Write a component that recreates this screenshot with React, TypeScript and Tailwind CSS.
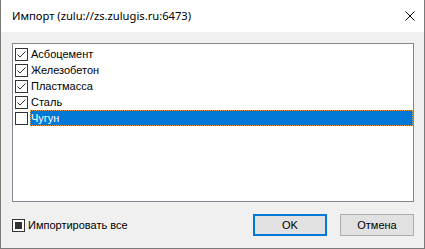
const items = [
  { label: 'Асбоцемент', checked: true },
  { label: 'Железобетон', checked: true },
  { label: 'Пластмасса', checked: true },
  { label: 'Сталь', checked: true },
  { label: 'Чугун', checked: false },
];
const selected = 4;

function CheckBox({ checked }: { checked: boolean }) {
  return (
    <div className="h-[13px] w-[13px] shrink-0 border border-[#333333] bg-white">
      {checked && (
        <svg width="11" height="11" viewBox="0 0 11 11" className="block">
          <path d="M1.5 5.5 L4 8 L9.5 2.5" fill="none" stroke="#333333" strokeWidth="1" />
        </svg>
      )}
    </div>
  );
}

export default function App() {
  return (
    <div
      className="flex h-[249px] w-[425px] flex-col border-x border-b border-[#7a7a7a] text-[11px] text-black"
      style={{ fontFamily: '"Liberation Sans", Arial, sans-serif' }}
    >
      <div
        className="flex h-[32px] shrink-0 items-center justify-between bg-white pl-[11px] pr-[9px] text-[11.2px]"
        style={{ fontFamily: '"Noto Sans", "Liberation Sans", sans-serif' }}
      >
        <span>Импорт (zulu://zs.zulugis.ru:6473)</span>
        <svg width="10" height="10" viewBox="0 0 10 10">
          <path d="M0.5 0.5 L9.5 9.5 M9.5 0.5 L0.5 9.5" stroke="#000" strokeWidth="1" />
        </svg>
      </div>

      <div className="flex flex-1 flex-col bg-[#f0f0f0] pl-[11px] pr-[10px] pt-[11px]">
        <div className="h-[159px] border border-[#828790] bg-white pt-[2px]">
          {items.map((item, i) => (
            <div key={item.label} className="flex h-[16px] items-start">
              <div className="ml-[2px] mt-[2px]">
                <CheckBox checked={item.checked} />
              </div>
              <div
                className={`ml-[2px] flex h-[16px] flex-1 items-center leading-none ${
                  i === selected ? 'border border-dotted border-[#f29a2e] bg-[#0078d7] text-white' : 'border border-transparent'
                }`}
              >
                {item.label}
              </div>
            </div>
          ))}
        </div>

        <div className="mt-[12px] flex items-center justify-between">
          <div className="flex items-center gap-[3px]">
            <div className="flex h-[13px] w-[13px] items-center justify-center border border-[#333333] bg-white">
              <div className="h-[7px] w-[7px] bg-[#333333]" />
            </div>
            <span>Импортировать все</span>
          </div>
          <div className="flex gap-[13px]">
            <button className="h-[22px] w-[74px] border-2 border-[#0078d7] bg-[#e1e1e1]">OK</button>
            <button className="h-[22px] w-[74px] border border-[#adadad] bg-[#e1e1e1]">Отмена</button>
          </div>
        </div>
      </div>
    </div>
  );
}
